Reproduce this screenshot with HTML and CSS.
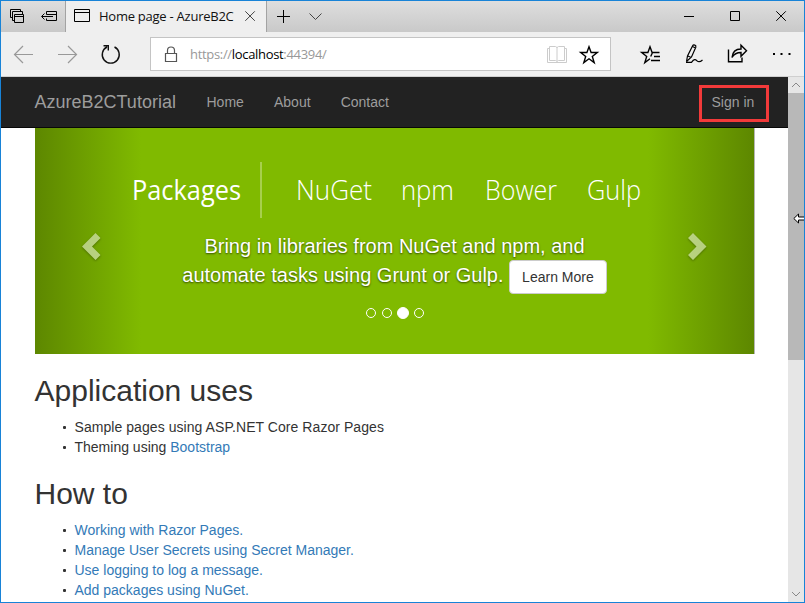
FILE: index.html
```html
<!DOCTYPE html>
<html lang="en">
<head>
<meta charset="utf-8">
<title>Home page - AzureB2CTutorial</title>
<link rel="stylesheet" href="styles.css">
</head>
<body>
<div class="window">
  <header class="tabstrip">
    <svg class="tab-tools" width="64" height="31" viewBox="1 1 64 31">
      <path d="M12 17.500h-1.500v-8h10v2M14 20.500h-1.500v-9h10v3M14.500 14.500h9v8h-9zM14 16.500h10"/>
      <path d="M46.500 14.500v-3h10v9h-10v-2M46.500 14.500h10M53 16.500H42M44.500 13.500l-3 3 3 3"/>
    </svg>
    <div class="tab">
      <svg width="18" height="31" viewBox="73 1 18 31"><path d="M74.500 9.500h15v12h-15zM74 12.500h16"/></svg>
      <span class="tab-title">Home page - AzureB2C</span>
      <svg class="tab-close" width="12" height="31" viewBox="244 1 12 31"><path d="M245.300 11.300l9.500 9.500M254.800 11.300l-9.500 9.500"/></svg>
    </div>
    <svg width="62" height="31" viewBox="267 1 62 31">
      <path d="M277 16.500h13M283.500 10v13"/><path class="dim" d="M309.500 13.500l6 6 6-6"/>
    </svg>
    <svg class="window-controls" width="130" height="31" viewBox="674 1 130 31">
      <path d="M684 16.500h10M730.500 11.500h9v9h-9zM776.300 11.300l9.500 9.500M785.800 11.300l-9.500 9.500"/>
    </svg>
  </header>
  <div class="toolbar">
    <svg class="history" width="149" height="44" viewBox="1 32 149 44">
      <path class="disabled" d="M33 54.500H15M23 46l-8.500 8.500L23 63M58 54.500h18M68 46l8.500 8.500L68 63"/>
      <path class="reload" d="M107 47a8.500 8.500 0 1 0 7.500 0M103.500 45.800h4.800v4.700"/>
    </svg>
    <div class="address">
      <svg width="39" height="32" viewBox="151 38 39 32"><path class="lock" d="M165.500 53.500h11v8h-11zM167.500 53.500v-3a3.500 3.500 0 0 1 7 0v3"/></svg>
      <span class="url">https://<b>localhost</b>:44394/</span>
      <svg class="address-tools" width="66" height="32" viewBox="544 38 66 32">
        <path class="book" d="M549.500 46.500h6l1.500 1 1.500-1h6v14h-6l-1.500 1-1.500-1h-6zM557 47v14M549 48.500h-1.500v14h19v-14H565"/>
        <path class="star" d="M589 46.800l2.100 5.700h6.200l-5 3.900 1.900 6.200-5.200-3.800-5.200 3.800 1.900-6.200-5-3.900h6.200z"/>
      </svg>
    </div>
    <svg class="browser-actions" width="193" height="44" viewBox="611 32 193 44">
      <path class="bold" d="M659.500 52.500h-7.400L650 46.800l-2.100 5.700h-6.200l5 3.900-1.900 6.200 5.200-3.800M652.500 52.500l-1.800 4M654 56.500h6M651 60.500h9"/>
      <path class="pen" d="M686.500 61.500l1-5.500 5-10c1-2 4-.8 3.300 1.200l-4.300 9.800-5 4.500M686 62.300h5.500c2.500-3.500 4-3 5.500-1.500s3.500 1 5.500-.8M692.500 46.500l3 1.500M688 56l3 1.500"/>
      <path class="bold" d="M728.500 49.500v12.300h13.500v-4.300M732 57.500c.5-5.500 4-8.500 9-8.500v-3.800l5.500 5.500-5.500 5.500v-3.700c-4 0-7 1.500-9 5z"/>
      <path class="dots" d="M773 53h2v2h-2zM780.500 53h2v2h-2zM788.500 53h2v2h-2z"/>
    </svg>
  </div>
  <div class="viewport">
    <main class="page">
      <nav class="navbar">
        <a class="brand">AzureB2CTutorial</a>
        <a class="nav-home">Home</a><a class="nav-about">About</a><a>Contact</a>
        <a class="signin">Sign in</a>
      </nav>
      <section class="carousel">
        <div class="control prev"><svg width="22" height="30" viewBox="0 0 22 30"><path d="M14.500 1L1 14.500 14.500 28l5-5-8.500-8.500L19.500 6z"/></svg></div>
        <div class="slide">
          <div class="banner">
            <svg width="519" height="70" viewBox="130 155 519 70">
              <path d="M261 162v56"/>
              <text x="132" y="200" textLength="109" lengthAdjust="spacingAndGlyphs" class="medium">Packages</text>
              <text x="296" y="200" textLength="76" lengthAdjust="spacingAndGlyphs">NuGet</text>
              <text x="401" y="200" textLength="53" lengthAdjust="spacingAndGlyphs">npm</text>
              <text x="485" y="200" textLength="72" lengthAdjust="spacingAndGlyphs">Bower</text>
              <text x="587" y="200" textLength="54" lengthAdjust="spacingAndGlyphs">Gulp</text>
            </svg>
          </div>
          <p class="caption">Bring in libraries from NuGet and npm, and<br>automate tasks using Grunt or Gulp. <a class="btn">Learn More</a></p>
          <div class="indicators"><i></i><i></i><i class="active"></i><i></i></div>
        </div>
        <div class="control next"><svg width="22" height="30" viewBox="0 0 22 30"><path d="M7 1l13.500 13.500L7 28l-5-5 8.500-8.500L2 6z"/></svg></div>
      </section>
      <section class="content">
        <h2>Application uses</h2>
        <ul>
          <li class="wide">Sample pages using ASP.NET Core Razor Pages</li>
          <li>Theming using <a>Bootstrap</a></li>
        </ul>
        <h2>How to</h2>
        <ul>
          <li><a>Working with Razor Pages.</a></li>
          <li><a>Manage User Secrets using Secret Manager.</a></li>
          <li><a>Use logging to log a message.</a></li>
          <li><a>Add packages using NuGet.</a></li>
        </ul>
      </section>
    </main>
    <aside class="scrollbar">
      <svg width="16" height="16" viewBox="0 0 16 16"><path d="M4 10l4-4 4 4"/></svg>
      <div class="thumb"></div>
      <svg class="down" width="16" height="16" viewBox="0 0 16 16"><path d="M4 6l4 4 4-4"/></svg>
    </aside>
  </div>
  <svg class="cursor" width="12" height="12" viewBox="0 0 12 12"><path d="M.8 5.500L5.500 1v3H13v3H5.500v3z"/></svg>
</div>
</body>
</html>
```
FILE: styles.css
```css
* { box-sizing: border-box; }
body { margin: 0; overflow: hidden; font: 14px/20px "Liberation Sans", Arial, sans-serif; color: #333; }
svg { display: block; flex: none; fill: none; stroke: #000; }
a { color: #337ab7; text-decoration: none; }
.window { position: relative; width: 805px; height: 603px; border: 1px solid #1883d7; display: flex; flex-direction: column; overflow: hidden; background: #fff; }

.tabstrip { height: 31px; flex: none; display: flex; background: linear-gradient(#dedede, #c9c9c9); }
.tab { width: 202px; display: flex; align-items: center; padding-left: 7px; background: #efefef; border: solid #a3a3a3; border-width: 0 1px; }
.tab-title { width: 137px; margin: 0 0 1px 8px; font: 13px/20px "Open Sans", "Noto Sans", sans-serif; letter-spacing: -.25px; color: #111; white-space: nowrap; }
.tab-close { margin-left: 8px; stroke: #444; }
.dim { stroke: #444; }
.window-controls { margin-left: auto; }

.toolbar { height: 45px; flex: none; display: flex; background: #efefef; border-bottom: 1px solid #cfcfcf; }
.disabled { stroke: #999; stroke-width: 1.2; }
.reload { stroke-width: 1.4; stroke: #111; }
.address { width: 461px; height: 34px; margin-top: 5px; display: flex; align-items: center; background: #fff; border: 1px solid #c4c4c4; }
.lock { stroke: #555; stroke-width: 1.2; }
.url { font: 13px/20px "Open Sans", "Noto Sans", sans-serif; letter-spacing: -.32px; color: #999; }
.url b { font-weight: 400; color: #000; }
.address-tools { margin-left: auto; }
.book { stroke: #ccc; }
.star, .bold { stroke-width: 1.4; }
.pen { stroke-width: 1.2; }
.dots { fill: #000; stroke: none; }

.viewport { flex: 1; min-height: 0; display: flex; }
.page { width: 787px; overflow: hidden; }
.navbar { height: 51px; display: flex; align-items: center; padding: 0 19px 0 33.5px; background: #222; border-bottom: 1px solid #080808; }
.navbar a { color: #9d9d9d; }
.navbar .brand { width: 172px; font-size: 18px; }
.navbar .nav-home { width: 67.500px; }
.navbar .nav-about { width: 66.700px; }
.navbar .signin { margin: 2px 0 0 auto; width: 70px; height: 37px; border: 3px solid #f23a3a; line-height: 29px; padding-left: 9.500px; }

.carousel { width: 720px; height: 226px; margin-left: 34px; display: flex; background: #80ba00; border-right: 1px solid #b5b5b5; }
.control { width: 108px; display: flex; align-items: center; padding-top: 11px; }
.control svg { fill: #fff; stroke: none; opacity: .5; filter: drop-shadow(0 1px 1px rgba(0,0,0,.6)); }
.prev { background: linear-gradient(to right, #5d8700, #80ba00 98%); padding-left: 46px; }
.next { background: linear-gradient(to left, #5d8700, #80ba00 98%); padding-left: 40px; }
.slide { width: 503px; display: flex; flex-direction: column; align-items: center; }
.banner { height: 70px; width: 519px; margin: 27px 0 0 -10px; }
.banner svg { fill: #fff; stroke: none; font: 300 27px "Open Sans", sans-serif; }
.banner path { stroke: #cfe59a; stroke-width: 1; }
.banner .medium { font-weight: 400; }
.caption { margin: 7px 0 0; font-size: 20px; line-height: 28px; color: #fff; text-align: center; text-shadow: 0 1px 2px rgba(0,0,0,.6); white-space: nowrap; }
.btn { display: inline-block; height: 34px; padding: 6px 12px; background: #fff; border: 1px solid #ccc; border-radius: 4px; color: #333; font-size: 14px; line-height: 20px; text-shadow: none; vertical-align: middle; }
.indicators { display: flex; gap: 6px; align-items: center; height: 12px; margin: 13px 0 0; }
.indicators i { width: 10px; height: 10px; border: 1px solid #fff; border-radius: 50%; }
.indicators .active { width: 12px; height: 12px; margin: 0 -1px; background: #fff; }

.content { padding-left: 33.500px; }
h2 { margin: 20px 0 10px; font-size: 30px; line-height: 33px; font-weight: 500; }
.content ul { margin: 0 0 10px; padding-left: 40px; list-style: none; }
.content li { height: 20px; position: relative; }
.content .wide { letter-spacing: .06px; }
.content li::before { content: ""; position: absolute; left: -12px; top: 9px; width: 3px; height: 3px; border-radius: 1px; background: #333; }

.scrollbar { width: 16px; display: flex; flex-direction: column; background: #e6e6e6; }
.scrollbar svg { stroke: #888; }
.thumb { height: 267px; background: #b8b8b8; }
.scrollbar .down { margin-top: auto; }
.cursor { position: absolute; left: 792px; top: 212px; fill: #fff; }
```
